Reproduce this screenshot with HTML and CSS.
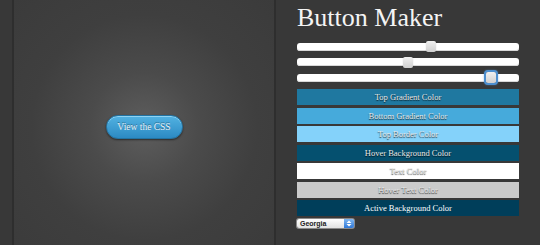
FILE: index.html
```html
<!DOCTYPE html>
<html lang="en">
<head>
  <meta charset="UTF-8">
  <meta name="viewport" content="width=device-width, initial-scale=1.0">
  <title>Button Maker</title>
  <link rel="stylesheet" href="styles.css">
</head>
<body>
  <div class="page">
    <div class="preview">
      <a class="css-button" href="#">View the CSS</a>
    </div>

    <div class="maker">
      <h1>Button Maker</h1>
      <div class="sliders">
        <input class="slider" type="range" min="0" max="100" value="61">
        <input class="slider" type="range" min="0" max="100" value="50">
        <input class="slider focused" type="range" min="0" max="100" value="89">
      </div>

      <div class="swatch top-gradient">Top Gradient Color</div>
      <div class="swatch bottom-gradient">Bottom Gradient Color</div>
      <div class="swatch top-border">Top Border Color</div>
      <div class="swatch hover-bg">Hover Background Color</div>
      <div class="swatch text-color">Text Color</div>
      <div class="swatch hover-text">Hover Text Color</div>
      <div class="swatch active-bg">Active Background Color</div>

      <div class="font-select">
        <span>Georgia</span>
        <span class="arrows">
          <svg width="6" height="7" viewBox="0 0 6 7"><path d="M3 0.5 L5.5 3 H0.5 Z M3 6.5 L5.5 4 H0.5 Z" fill="#fff"/></svg>
        </span>
      </div>
    </div>
  </div>
</body>
</html>
```

FILE: styles.css
```css
body {
  margin: 0;
  background: #383838;
  font-family: "Liberation Serif", Georgia, serif;
  overflow: hidden;
}
.page {
  display: flex;
  height: 245px;
}
.preview {
  margin-left: 12px;
  width: 264px;
  border-left: 2px solid #2e2e2e;
  border-right: 2px solid #2e2e2e;
  background: radial-gradient(circle at 50% 52%, #5e5e5e 0, #4b4b4b 30%, #3f3f3f 62%, #3b3b3b 100%);
  display: flex;
  align-items: center;
  justify-content: center;
  padding-top: 9px;
  box-sizing: border-box;
}
.css-button {
  width: 77px;
  height: 24px;
  box-sizing: border-box;
  border-radius: 12px;
  border: 1px solid #2273a2;
  background: linear-gradient(#52b2e2, #2c8ac3);
  box-shadow: inset 0 1px 0 #8fd3f3, 0 1px 2px rgba(0, 0, 0, 0.5);
  color: #e8f0f4;
  text-shadow: 0 -1px 0 rgba(0, 0, 0, 0.35);
  font-size: 9.5px;
  line-height: 22px;
  text-align: center;
  text-decoration: none;
}
.maker {
  width: 222px;
  margin-left: 21px;
}
h1 {
  margin: 5px 0 0;
  font-size: 26px;
  line-height: 26px;
  font-weight: normal;
  color: #f4f4f4;
}
.sliders {
  margin-top: 8px;
  display: flex;
  flex-direction: column;
}
.slider {
  -webkit-appearance: none;
  appearance: none;
  margin: 0;
  width: 222px;
  height: 15.5px;
  background: transparent;
}
.slider::-webkit-slider-runnable-track {
  height: 8px;
  background: #fff;
  border-radius: 3px;
  box-shadow: inset 0 -1px 0 #d8d8d8;
}
.slider::-webkit-slider-thumb {
  -webkit-appearance: none;
  width: 10px;
  height: 11px;
  margin-top: -1.5px;
  border-radius: 2px;
  background: linear-gradient(#f0f0f0, #d0d0d0);
  box-shadow: 0 0 1px rgba(0, 0, 0, 0.3);
}
.slider.focused::-webkit-slider-thumb {
  box-shadow: 0 0 0 2px #4d8fcf, 0 0 2px 2px rgba(77, 143, 207, 0.6);
}
.swatch {
  height: 16px;
  line-height: 16px;
  margin-bottom: 2.5px;
  text-align: center;
  font-size: 8.5px;
  color: #e8e8e8;
  text-shadow: 0 1px 1px rgba(0, 0, 0, 0.8);
}
.sliders + .swatch {
  margin-top: 3.5px;
}
.top-gradient { background: #1f78a0; }
.bottom-gradient { background: #46aadb; }
.top-border { background: #84d2fa; }
.hover-bg { background: #05506f; }
.text-color { background: #ffffff; }
.hover-text { background: #cbcbcb; }
.active-bg { background: #003e5a; color: #fff; text-shadow: none; }
.font-select {
  margin-top: 3px;
  width: 57px;
  height: 9px;
  box-sizing: border-box;
  border-radius: 2px;
  background: linear-gradient(#ffffff, #e2e2e2);
  box-shadow: 0 0 0 1px #8a8a8a;
  display: flex;
  justify-content: space-between;
  align-items: center;
  font-family: "Liberation Sans", Arial, sans-serif;
  font-size: 7px;
  font-weight: bold;
  color: #222;
  padding-left: 3px;
}
.arrows {
  width: 10px;
  height: 9px;
  border-radius: 0 2px 2px 0;
  background: linear-gradient(#7fb6f0, #2f78d8);
  display: flex;
  align-items: center;
  justify-content: center;
}
```
